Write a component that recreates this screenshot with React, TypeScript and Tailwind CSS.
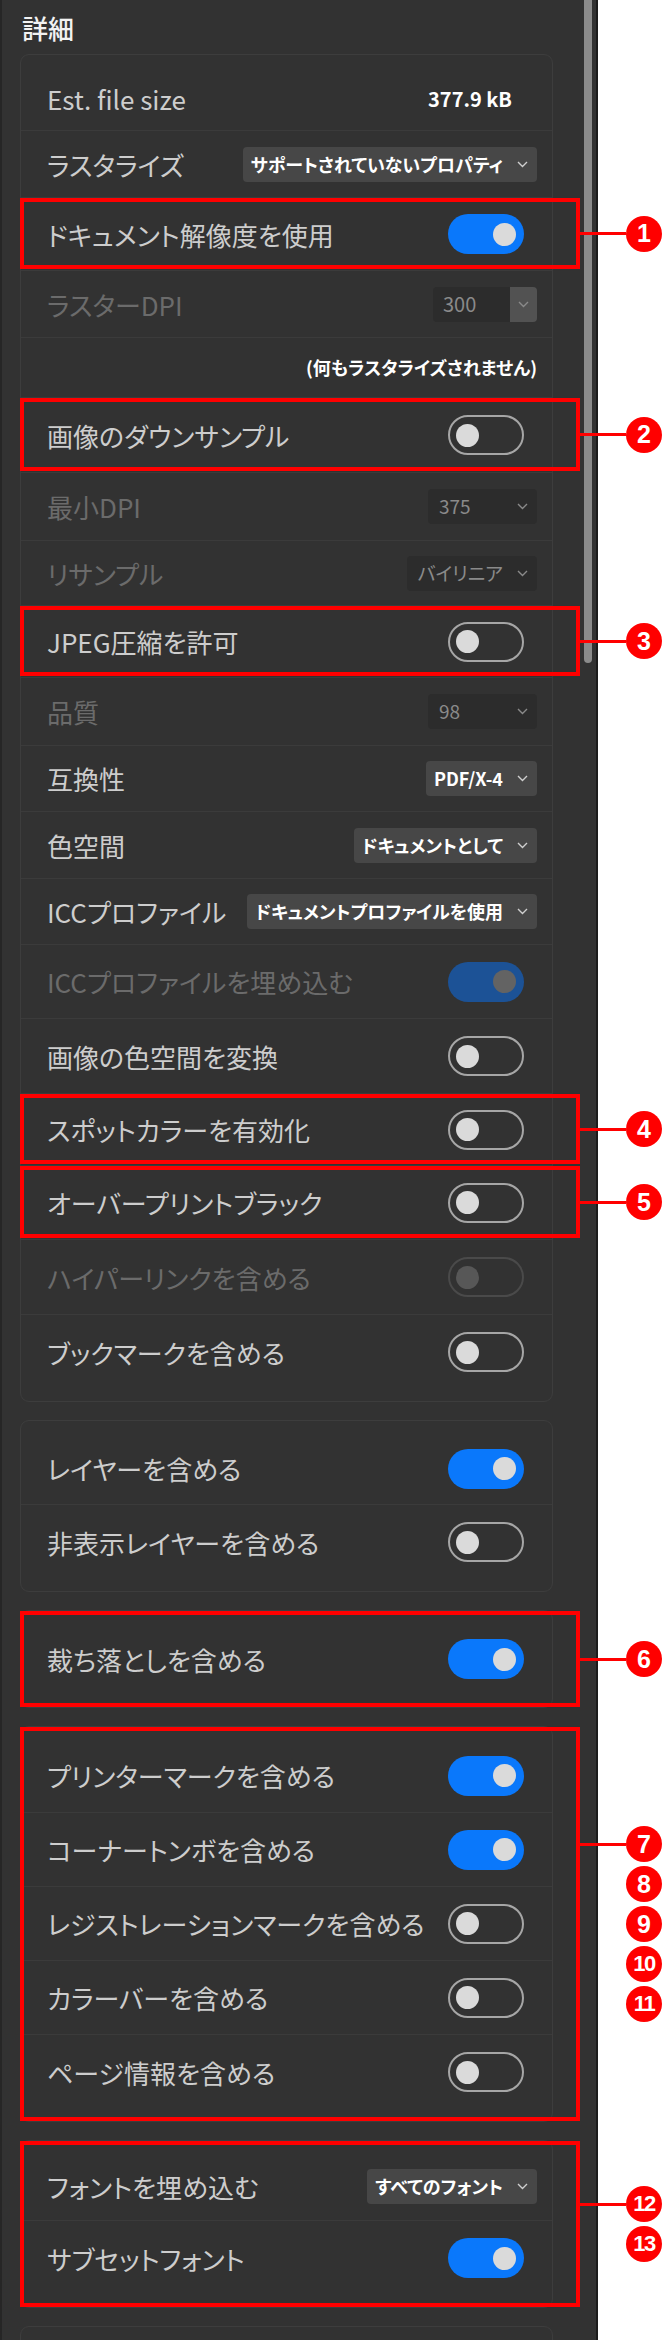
import React from "react";

type Row = {
  kind: "info" | "select" | "spin" | "toggle" | "note";
  label?: string;
  value?: string;
  on?: boolean;
  disabled?: boolean;
  fixed?: boolean;
  h: string;
  mark?: number;
};

const mainRows: Row[] = [
  { kind: "info", label: "Est. file size", value: "377.9 kB", h: "h-[64px]" },
  { kind: "select", label: "ラスタライズ", value: "サポートされていないプロパティ", h: "h-[67px]" },
  { kind: "toggle", label: "ドキュメント解像度を使用", on: true, h: "h-[73px]", mark: 1 },
  { kind: "spin", label: "ラスターDPI", value: "300", disabled: true, h: "h-[67px]" },
  { kind: "note", value: "(何もラスタライズされません)", h: "h-[60px]" },
  { kind: "toggle", label: "画像のダウンサンプル", on: false, h: "h-[75px]", mark: 2 },
  { kind: "select", label: "最小DPI", value: "375", disabled: true, fixed: true, h: "h-[68px]" },
  { kind: "select", label: "リサンプル", value: "バイリニア", disabled: true, h: "h-[65px]" },
  { kind: "toggle", label: "JPEG圧縮を許可", on: false, h: "h-[72px]", mark: 3 },
  { kind: "select", label: "品質", value: "98", disabled: true, fixed: true, h: "h-[68px]" },
  { kind: "select", label: "互換性", value: "PDF/X-4", h: "h-[66px]" },
  { kind: "select", label: "色空間", value: "ドキュメントとして", h: "h-[67px]" },
  { kind: "select", label: "ICCプロファイル", value: "ドキュメントプロファイルを使用", h: "h-[66px]" },
  { kind: "toggle", label: "ICCプロファイルを埋め込む", on: true, disabled: true, h: "h-[74px]" },
  { kind: "toggle", label: "画像の色空間を変換", on: false, h: "h-[75px]" },
  { kind: "toggle", label: "スポットカラーを有効化", on: false, h: "h-[72px]", mark: 4 },
  { kind: "toggle", label: "オーバープリントブラック", on: false, h: "h-[74px]", mark: 5 },
  { kind: "toggle", label: "ハイパーリンクを含める", on: false, disabled: true, h: "h-[75px]" },
  { kind: "toggle", label: "ブックマークを含める", on: false, h: "h-[74px]" }
];

const layerRows: Row[] = [
  { kind: "toggle", label: "レイヤーを含める", on: true, h: "h-[72px]" },
  { kind: "toggle", label: "非表示レイヤーを含める", on: false, h: "h-[74px]" }
];

const bleedRows: Row[] = [{ kind: "toggle", label: "裁ち落としを含める", on: true, h: "h-[72px]" }];

const markRows: Row[] = [
  { kind: "toggle", label: "プリンターマークを含める", on: true, h: "h-[74px]" },
  { kind: "toggle", label: "コーナートンボを含める", on: true, h: "h-[74px]" },
  { kind: "toggle", label: "レジストレーションマークを含める", on: false, h: "h-[74px]" },
  { kind: "toggle", label: "カラーバーを含める", on: false, h: "h-[74px]" },
  { kind: "toggle", label: "ページ情報を含める", on: false, h: "h-[74px]" }
];

const fontRows: Row[] = [
  { kind: "select", label: "フォントを埋め込む", value: "すべてのフォント", h: "h-[68px]" },
  { kind: "toggle", label: "サブセットフォント", on: true, h: "h-[74px]" }
];

function Chevron({ dim }: { dim?: boolean }) {
  return (
    <svg width="11" height="7" viewBox="0 0 11 7" className="shrink-0">
      <polyline
        points="1,1 5.5,5.5 10,1"
        fill="none"
        stroke={dim ? "#8a8a8a" : "#cfcfcf"}
        strokeWidth="1.4"
      />
    </svg>
  );
}

function Toggle({ on, disabled }: { on?: boolean; disabled?: boolean }) {
  if (on) {
    return (
      <div
        className={`flex h-[40px] w-[76px] items-center justify-end rounded-full px-[8px] ${
          disabled ? "bg-[#1c5296]" : "bg-[#0a78fb]"
        }`}
      >
        <div className={`h-[23px] w-[23px] rounded-full ${disabled ? "bg-[#636363]" : "bg-[#dadada]"}`} />
      </div>
    );
  }
  return (
    <div
      className={`flex h-[40px] w-[76px] items-center rounded-full border-2 px-[6px] ${
        disabled ? "border-[#4a4a4a]" : "border-[#a6a6a6]"
      }`}
    >
      <div className={`h-[23px] w-[23px] rounded-full ${disabled ? "bg-[#575757]" : "bg-[#dadada]"}`} />
    </div>
  );
}

function Badge({ n }: { n: number }) {
  return (
    <div
      className={`flex h-9 w-9 shrink-0 items-center justify-center rounded-full bg-[#f00] font-['Liberation_Sans',sans-serif] font-bold leading-none text-white ${
        n > 9 ? "text-[22px] tracking-[-1.5px]" : "text-[25px]"
      }`}
    >
      {n}
    </div>
  );
}

function Frame({ nums, className }: { nums: number[]; className: string }) {
  return (
    <div className={`pointer-events-none absolute z-10 border-4 border-[#f00] ${className}`}>
      <div className="absolute left-[calc(100%+4px)] top-1/2 flex -translate-y-1/2 flex-col gap-[4px]">
        {nums.map((n, i) => (
          <div key={n} className="flex items-center">
            <div className={`h-[3px] w-[46px] ${i === 0 ? "bg-[#f00]" : ""}`} />
            <Badge n={n} />
          </div>
        ))}
      </div>
    </div>
  );
}

function Control({ row }: { row: Row }) {
  if (row.kind === "toggle") return <Toggle on={row.on} disabled={row.disabled} />;

  if (row.kind === "info") {
    return <span className="pr-[25px] text-[20px] font-bold text-white">{row.value}</span>;
  }

  if (row.kind === "spin") {
    return (
      <div className="flex h-[35px] items-stretch">
        <div className="flex w-[77px] items-center rounded-l-[4px] bg-[#2c2c2c] pl-[10px] text-[20px] text-[#8a8a8a]">
          {row.value}
        </div>
        <div className="flex w-[27px] items-center justify-center rounded-r-[4px] bg-[#525252]">
          <Chevron dim />
        </div>
      </div>
    );
  }

  if (row.disabled) {
    return (
      <div
        className={`flex h-[35px] items-center justify-between gap-[14px] rounded-[4px] bg-[#2c2c2c] pl-[11px] pr-[9px] text-[19px] text-[#8a8a8a] ${
          row.fixed ? "w-[109px]" : ""
        }`}
      >
        <span>{row.value}</span>
        <Chevron dim />
      </div>
    );
  }

  return (
    <div className="flex h-[35px] items-center gap-[14px] rounded-[4px] bg-[#474747] pl-[8px] pr-[9px] text-[18px] font-bold text-white">
      <span className="whitespace-nowrap">{row.value}</span>
      <Chevron />
    </div>
  );
}

function SettingRow({ row, last }: { row: Row; last: boolean }) {
  const pad = row.kind === "toggle" ? "pr-[28px]" : "pr-[15px]";
  return (
    <div
      className={`relative flex shrink-0 items-center justify-between pl-[26px] ${pad} ${row.h} ${
        last ? "" : "border-b border-[#3b3b3b]"
      }`}
    >
      {row.kind === "note" ? (
        <>
          <span />
          <span className="text-[18px] font-bold text-white">{row.value}</span>
        </>
      ) : (
        <>
          <span
            className={`whitespace-nowrap text-[26px] ${row.disabled ? "text-[#6b6b6b]" : "text-[#cdcdcd]"}`}
          >
            {row.label}
          </span>
          <Control row={row} />
        </>
      )}
      {row.mark ? <Frame nums={[row.mark]} className="left-[-1px] right-[-28px] top-0 bottom-px" /> : null}
    </div>
  );
}

function Card({ rows, marks }: { rows: Row[]; marks?: number[] }) {
  return (
    <div className="relative w-[533px] shrink-0 rounded-[9px] border border-[#3d3d3d] py-3">
      {rows.map((row, i) => (
        <SettingRow key={i} row={row} last={i === rows.length - 1} />
      ))}
      {marks ? <Frame nums={marks} className="left-[-1px] right-[-28px] top-0 bottom-0" /> : null}
    </div>
  );
}

export default function App() {
  return (
    <div className="relative h-[2340px] w-[662px] overflow-hidden bg-white font-['Noto_Sans_CJK_JP',sans-serif] [font-feature-settings:'palt']">
      <div className="flex h-full w-[598px] border-r-2 border-[#1c1c1c] bg-[#323232]">
        <div className="w-[2px] shrink-0 bg-[#262626]" />
        <div className="flex w-[582px] shrink-0 flex-col gap-[18px] pl-[18px]">
          <div className="-mb-[18px] flex h-[54px] shrink-0 items-center pl-[2px] text-[26px] font-medium text-[#f2f2f2]">
            詳細
          </div>
          <Card rows={mainRows} />
          <Card rows={layerRows} />
          <Card rows={bleedRows} marks={[6]} />
          <Card rows={markRows} marks={[7, 8, 9, 10, 11]} />
          <Card rows={fontRows} marks={[12, 13]} />
          <div className="h-[80px] w-[533px] shrink-0 rounded-[9px] border border-[#3d3d3d]" />
        </div>
        <div className="h-[663px] w-[8px] shrink-0 rounded-b-full bg-[#8b8b8b]" />
      </div>
    </div>
  );
}
